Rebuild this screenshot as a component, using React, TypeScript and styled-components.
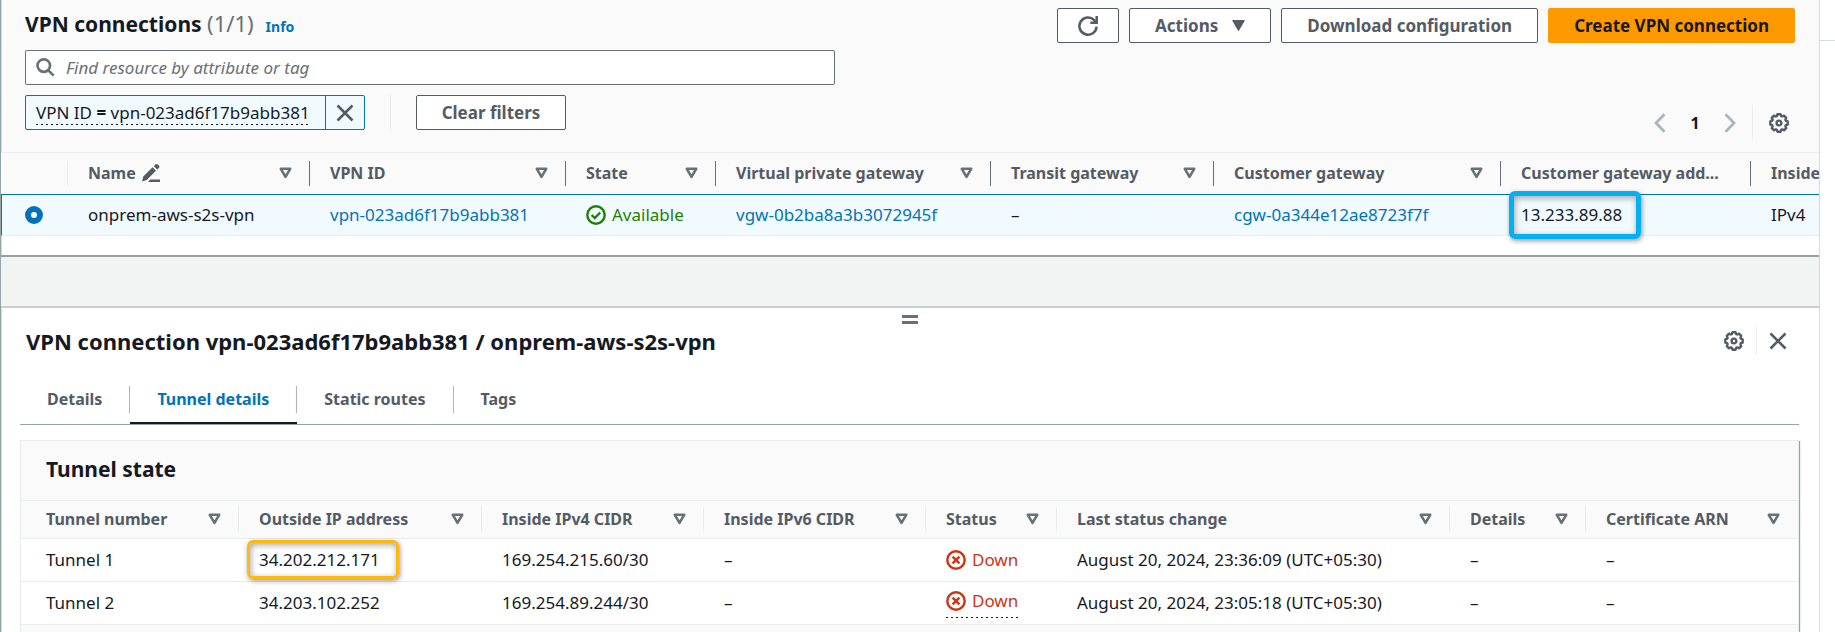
import React from "react";
import styled, { createGlobalStyle, css } from "styled-components";

const color = {
  text: "#16191f",
  muted: "#545b64",
  icon: "#687078",
  link: "#0073bb",
  green: "#1d8102",
  red: "#d13212",
  orange: "#ff9900",
  line: "#eaeded",
  bar: "#fafafa",
  page: "#f2f3f3",
  selected: "#f1faff",
  disabled: "#aab7b8",
};

const GlobalStyle = createGlobalStyle`
  * { box-sizing: border-box; }
  body {
    margin: 0;
    background: #ffffff;
    color: ${color.text};
    font: 400 17px/24px "Noto Sans", "Open Sans", sans-serif;
  }
  button, input { font: inherit; }
  h1, h2, h3 { margin: 0; line-height: 28px; font-weight: 700; }
  h1, h3 { font-size: 21px; }
  h2 { font-size: 22px; }
  a { color: ${color.link}; text-decoration: none; }
`;

const dottedUnderline = css`
  background-image: repeating-linear-gradient(90deg, ${color.text} 0 2px, transparent 2px 5px);
  background-repeat: no-repeat;
  background-position: left bottom;
  background-size: 100% 1px;
`;

const Shell = styled.div`
  display: flex;
  height: 100vh;
  min-height: 632px;
  overflow: hidden;
`;

const Main = styled.main`
  flex: 1;
  min-width: 0;
  display: flex;
  flex-direction: column;
  background: ${color.page};
  border-left: 1px solid #95a5a6;
  overflow: hidden;
`;

const Aside = styled.aside`
  width: 16px;
  flex: none;
  border-left: 1px solid #d5dbdb;
  background: #ffffff;
`;

const AsideHeader = styled.div`
  height: 41px;
  border-bottom: 1px solid #d5dbdb;
`;

const ListPanel = styled.section`
  background: #ffffff;
  padding-bottom: 19px;
  border-bottom: 2px solid #95a0a1;
  box-shadow: inset 1px 0 0 #d5dbdb;
`;

const ListHeader = styled.header`
  background: ${color.bar};
  border-bottom: 1px solid ${color.line};
  box-shadow: inset 1px 0 0 #d5dbdb;
  padding: 8px 24px 12px;
`;

const TitleRow = styled.div`
  display: flex;
  align-items: center;
  justify-content: space-between;
  height: 35px;
`;

const Title = styled.div`
  display: flex;
  align-items: baseline;
  gap: 12px;
  padding-bottom: 4px;
`;

const Count = styled.span`
  font-size: 22px;
  font-weight: 400;
  color: ${color.icon};
`;

const InfoLink = styled.a`
  font-size: 14px;
  font-weight: 700;
`;

const Actions = styled.div`
  display: flex;
  gap: 10px;
`;

const Button = styled.button<{ $primary?: boolean; $icon?: boolean }>`
  display: flex;
  align-items: center;
  gap: 14px;
  height: 35px;
  padding: 0 ${(p) => (p.$icon ? 20 : 25)}px;
  border: 1px solid ${(p) => (p.$primary ? color.orange : color.muted)};
  border-radius: 2px;
  background: ${(p) => (p.$primary ? color.orange : "#ffffff")};
  color: ${(p) => (p.$primary ? color.text : color.muted)};
  font-weight: 700;
  white-space: nowrap;
`;

const SearchBox = styled.label`
  display: flex;
  align-items: center;
  gap: 11px;
  max-width: 810px;
  height: 35px;
  margin-top: 7px;
  padding: 0 10px;
  border: 1px solid ${color.icon};
  border-radius: 2px;
  background: #ffffff;
  color: ${color.icon};
`;

const SearchInput = styled.input`
  flex: 1;
  min-width: 0;
  padding: 0;
  border: 0;
  outline: 0;
  background: none;
  &::placeholder { color: ${color.icon}; font-style: italic; opacity: 1; }
`;

const FilterRow = styled.div`
  display: flex;
  justify-content: space-between;
  align-items: flex-start;
  margin-top: 10px;
`;

const Filters = styled.div`
  display: flex;
  align-items: stretch;
  height: 35px;
`;

const Token = styled.div`
  display: flex;
  border: 1px solid ${color.link};
  border-radius: 2px;
  background: ${color.selected};
`;

const TokenText = styled.span`
  align-self: center;
  margin: 0 15px 0 10px;
  padding: 2px 0 1px;
  line-height: 22px;
  ${dottedUnderline}
`;

const TokenRemove = styled.button`
  display: flex;
  align-items: center;
  justify-content: center;
  width: 39px;
  padding: 0;
  border: 0;
  border-left: 1px solid ${color.link};
  background: none;
  color: ${color.muted};
`;

const Divider = styled.span<{ $gap: number }>`
  width: 1px;
  align-self: stretch;
  margin: 0 ${(p) => p.$gap}px;
  background: ${color.line};
`;

const Pager = styled.nav`
  display: flex;
  align-items: center;
  height: 35px;
  margin-top: 10px;
  padding-right: 6px;
`;

const IconButton = styled.button<{ $faint?: boolean }>`
  display: flex;
  padding: 0;
  border: 0;
  background: none;
  color: ${(p) => (p.$faint ? color.disabled : color.muted)};
`;

const PageNumber = styled.strong`
  width: 58px;
  text-align: center;
  font-size: 16px;
`;

const Table = styled.table`
  width: 100%;
  table-layout: fixed;
  border-collapse: separate;
  border-spacing: 0;
`;

const Col = styled.col<{ $width?: number }>`
  width: ${(p) => (p.$width ? `${p.$width}px` : "auto")};
`;

const HeadCell = styled.th<{ $tall?: boolean }>`
  height: ${(p) => (p.$tall ? 41 : 38)}px;
  padding: 0;
  background: ${color.bar};
  color: ${color.muted};
  font-size: 16px;
  text-align: left;
  border-bottom: ${(p) => (p.$tall ? "0" : `1px solid ${color.line}`)};
`;

const HeadInner = styled.div<{ $first?: number; $sep?: string }>`
  display: flex;
  align-items: center;
  justify-content: space-between;
  height: 25px;
  padding: 0 17px 1px ${(p) => p.$first ?? 20}px;
  border-right: 1px solid ${(p) => p.$sep ?? "transparent"};
  white-space: nowrap;
`;

const HeadLabel = styled.span`
  display: flex;
  align-items: center;
  gap: 6px;
`;

const Cell = styled.td<{ $first?: number; $selected?: boolean }>`
  height: ${(p) => (p.$selected ? 42 : 43)}px;
  padding: 0 0 0 ${(p) => p.$first ?? 20}px;
  white-space: nowrap;
  border-bottom: 1px solid ${color.line};
  ${(p) =>
    p.$selected &&
    css`
      background: ${color.selected};
      border-top: 1px solid ${color.link};
      &:first-child { border-left: 1px solid ${color.link}; }
    `}
`;

const Radio = styled.input`
  display: block;
  appearance: none;
  width: 18px;
  height: 18px;
  margin: 0;
  border: 6px solid ${color.link};
  border-radius: 50%;
  background: #ffffff;
`;

const Status = styled.span<{ $tone: string; $dotted?: boolean }>`
  display: inline-flex;
  align-items: center;
  gap: 6px;
  color: ${(p) => p.$tone};
  line-height: 26px;
  vertical-align: middle;
  ${(p) =>
    p.$dotted &&
    css`
      padding-bottom: 4px;
      ${dottedUnderline}
    `}
`;

const Highlight = styled.span<{ $blue?: boolean }>`
  position: relative;
  display: inline-block;
  &::after {
    content: "";
    position: absolute;
    inset: ${(p) => (p.$blue ? "-12px -19px -12px -12px" : "-8px -19px -7px -12px")};
    border: ${(p) => (p.$blue ? "5px solid #00b0f0" : "3px solid #ffb80f")};
    border-radius: 6px;
    box-shadow: 1px 2px 5px rgba(0, 0, 0, 0.4), inset 1px 2px 6px rgba(0, 0, 0, 0.35);
  }
`;

const SplitPanel = styled.section`
  flex: 1;
  margin-top: 49px;
  padding: 7px 20px 0 19px;
  background: #ffffff;
  border-top: 2px solid #c8cfcf;
  box-shadow: inset 1px 0 0 #d5dbdb;
`;

const Handle = styled.button`
  display: flex;
  flex-direction: column;
  gap: 3px;
  width: 16px;
  margin: 0 auto;
  padding: 0;
  border: 0;
  background: none;
  &::before, &::after {
    content: "";
    height: 3px;
    background: ${color.icon};
  }
`;

const PanelTitleRow = styled.div`
  display: flex;
  align-items: center;
  justify-content: space-between;
  height: 29px;
  margin-top: 2px;
  padding: 0 12px 0 6px;
`;

const PanelTools = styled.div`
  display: flex;
  align-items: center;
  height: 29px;
`;

const Tabs = styled.div`
  display: flex;
  height: 44px;
  margin-top: 26px;
  border-bottom: 1px solid #95a5a6;
`;

const Tab = styled.button<{ $active?: boolean }>`
  display: flex;
  height: 43px;
  padding: 0;
  border: 0;
  border-bottom: 2px solid ${(p) => (p.$active ? color.text : "transparent")};
  background: none;
  color: ${(p) => (p.$active ? color.link : color.muted)};
  font-size: 16px;
  font-weight: 700;
`;

const TabLabel = styled.span<{ $last?: boolean }>`
  height: 27px;
  margin-top: 5px;
  padding: 0 27px;
  line-height: 26px;
  border-right: 1px solid ${(p) => (p.$last ? "transparent" : color.disabled)};
`;

const Card = styled.section`
  margin-top: 15px;
  border: 1px solid ${color.line};
  border-bottom: 0;
  background: ${color.bar};
  box-shadow: 1px 1px 1px 0 rgba(0, 28, 36, 0.4);
  padding-bottom: 20px;
`;

const CardHeader = styled.header`
  padding: 14px 25px 17px;
  border-bottom: 1px solid ${color.line};
`;

const Row = styled.tr`
  background: #ffffff;
`;

const SortIcon = () => (
  <svg width="13" height="12" viewBox="0 0 13 12" fill="none" stroke={color.icon} strokeWidth="2.6" strokeLinejoin="round" aria-hidden="true">
    <path d="M1.8 1.8h9.4L6.5 9.8z" />
  </svg>
);

const CloseIcon = () => (
  <svg width="18" height="18" viewBox="0 0 18 18" fill="none" stroke="currentColor" strokeWidth="2.6" aria-hidden="true">
    <path d="M1.5 1.5l15 15M16.5 1.5l-15 15" />
  </svg>
);

const SearchIcon = () => (
  <svg width="19" height="19" viewBox="0 0 20 20" fill="none" stroke="currentColor" strokeWidth="2.8" aria-hidden="true">
    <circle cx="8.2" cy="8" r="6.6" />
    <path d="M13 13l5.6 5.6" />
  </svg>
);

const RefreshIcon = () => (
  <svg width="20" height="20" viewBox="0 0 20 20" fill="none" stroke="currentColor" strokeWidth="2.5" aria-hidden="true">
    <path d="M18.6 10.6a8.6 8.6 0 1 1-2.3-6.4l1.6 2.2" />
    <path d="M18.7 0v6.8h-6.4" />
  </svg>
);

const CaretIcon = () => (
  <svg width="13" height="11" viewBox="0 0 13 11" fill="currentColor" aria-hidden="true">
    <path d="M1 0h11q1.2 0 .6 1L7.2 10.3q-.7 1-1.4 0L.4 1Q-.2 0 1 0z" />
  </svg>
);

const ChevronIcon = ({ right }: { right?: boolean }) => (
  <svg width="12" height="20" viewBox="0 0 12 20" fill="none" stroke="currentColor" strokeWidth="2.8" aria-hidden="true">
    <path d={right ? "M1.5 1.2L10 10l-8.5 8.8" : "M10.5 1.2L2 10l8.5 8.8"} />
  </svg>
);

const GearIcon = () => (
  <svg width="20" height="20" viewBox="0 0 20 20" fill="none" stroke="currentColor" strokeWidth="2.4" strokeLinejoin="round" aria-hidden="true">
    <path d="M8.4 1.3h3.2l.6 1.8 1 .4 1.8-.8 2.2 2.2-.8 1.8.4 1 1.9.7v3.2l-1.9.6-.4 1 .8 1.9-2.2 2.2-1.8-.9-1 .5-.6 1.8H8.4l-.6-1.8-1-.5-1.8.9-2.2-2.2.8-1.9-.4-1-1.9-.6V8.4l1.9-.7.4-1-.8-1.8L5 2.7l1.8.8 1-.4z" />
    <circle cx="10" cy="10" r="2.4" />
  </svg>
);

const PencilIcon = () => (
  <svg width="18" height="18" viewBox="0 0 18 18" fill="currentColor" aria-hidden="true">
    <path d="M0 17.6l1.3-5L10.6 3.3l3.4 3.4-9.3 9.4zM11.8 2.2l1.6-1.6q1.3-1.1 2.5 0l1 1q1 1.2 0 2.4l-1.6 1.5zM8.4 15.4H18V18H6z" />
  </svg>
);

const CheckCircle = () => (
  <svg width="20" height="20" viewBox="0 0 20 20" fill="none" stroke="currentColor" strokeWidth="2.4" aria-hidden="true">
    <circle cx="10" cy="10" r="8.7" />
    <path d="M5.6 10l3.2 3.1 5.4-5.6" />
  </svg>
);

const CrossCircle = () => (
  <svg width="20" height="20" viewBox="0 0 20 20" fill="none" stroke="currentColor" strokeWidth="2.4" aria-hidden="true">
    <circle cx="10" cy="10" r="8.7" />
    <path d="M6.6 6.6l6.8 6.8M13.4 6.6l-6.8 6.8" />
  </svg>
);

const vpnColumns = [
  { label: "Name", width: 242, editable: true, sort: true },
  { label: "VPN ID", width: 256, sort: true },
  { label: "State", width: 150, sort: true },
  { label: "Virtual private gateway", width: 275, sort: true },
  { label: "Transit gateway", width: 223, sort: true },
  { label: "Customer gateway", width: 287, sort: true },
  { label: "Customer gateway add...", width: 250 },
];

const tunnelColumns = [
  { label: "Tunnel number", width: 218 },
  { label: "Outside IP address", width: 243 },
  { label: "Inside IPv4 CIDR", width: 222 },
  { label: "Inside IPv6 CIDR", width: 222 },
  { label: "Status", width: 131 },
  { label: "Last status change", width: 393 },
  { label: "Details", width: 136 },
  { label: "Certificate ARN" },
];

const tunnels = [
  { name: "Tunnel 1", ip: "34.202.212.171", cidr: "169.254.215.60/30", changed: "August 20, 2024, 23:36:09 (UTC+05:30)", marked: true },
  { name: "Tunnel 2", ip: "34.203.102.252", cidr: "169.254.89.244/30", changed: "August 20, 2024, 23:05:18 (UTC+05:30)", marked: false },
];

const tabs = ["Details", "Tunnel details", "Static routes", "Tags"];

export default function App() {
  return (
    <Shell>
      <GlobalStyle />
      <Main>
        <ListPanel>
          <ListHeader>
            <TitleRow>
              <Title>
                <h1>
                  VPN connections <Count>(1/1)</Count>
                </h1>
                <InfoLink href="#info">Info</InfoLink>
              </Title>
              <Actions>
                <Button $icon aria-label="Refresh"><RefreshIcon /></Button>
                <Button>Actions <CaretIcon /></Button>
                <Button>Download configuration</Button>
                <Button $primary>Create VPN connection</Button>
              </Actions>
            </TitleRow>
            <SearchBox>
              <SearchIcon />
              <SearchInput type="text" aria-label="Find resource" placeholder="Find resource by attribute or tag" />
            </SearchBox>
            <FilterRow>
              <Filters>
                <Token>
                  <TokenText>VPN ID <b>=</b> vpn-023ad6f17b9abb381</TokenText>
                  <TokenRemove aria-label="Remove filter"><CloseIcon /></TokenRemove>
                </Token>
                <Divider $gap={25} />
                <Button>Clear filters</Button>
              </Filters>
              <Pager aria-label="Pagination">
                <IconButton $faint aria-label="Previous page"><ChevronIcon /></IconButton>
                <PageNumber>1</PageNumber>
                <IconButton $faint aria-label="Next page"><ChevronIcon right /></IconButton>
                <Divider $gap={16} />
                <IconButton aria-label="Preferences"><GearIcon /></IconButton>
              </Pager>
            </FilterRow>
          </ListHeader>
          <Table>
            <colgroup>
              <Col $width={67} />
              {vpnColumns.map((c) => <Col key={c.label} $width={c.width} />)}
              <Col />
            </colgroup>
            <thead>
              <tr>
                <HeadCell $tall><HeadInner $sep={color.line} /></HeadCell>
                {vpnColumns.map((c) => (
                  <HeadCell $tall key={c.label} scope="col">
                    <HeadInner $sep={color.icon}>
                      <HeadLabel>
                        {c.label}
                        {c.editable && <PencilIcon />}
                      </HeadLabel>
                      {c.sort && <SortIcon />}
                    </HeadInner>
                  </HeadCell>
                ))}
                <HeadCell $tall scope="col"><HeadInner>Inside</HeadInner></HeadCell>
              </tr>
            </thead>
            <tbody>
              <tr>
                <Cell $selected $first={23}><Radio type="radio" name="vpn" aria-label="onprem-aws-s2s-vpn" defaultChecked /></Cell>
                <Cell $selected>onprem-aws-s2s-vpn</Cell>
                <Cell $selected><a href="#vpn">vpn-023ad6f17b9abb381</a></Cell>
                <Cell $selected><Status $tone={color.green}><CheckCircle />Available</Status></Cell>
                <Cell $selected><a href="#vgw">vgw-0b2ba8a3b3072945f</a></Cell>
                <Cell $selected>–</Cell>
                <Cell $selected><a href="#cgw">cgw-0a344e12ae8723f7f</a></Cell>
                <Cell $selected><Highlight $blue>13.233.89.88</Highlight></Cell>
                <Cell $selected>IPv4</Cell>
              </tr>
            </tbody>
          </Table>
        </ListPanel>

        <SplitPanel>
          <Handle aria-label="Resize panel" />
          <PanelTitleRow>
            <h2>VPN connection vpn-023ad6f17b9abb381 / onprem-aws-s2s-vpn</h2>
            <PanelTools>
              <IconButton aria-label="Panel preferences"><GearIcon /></IconButton>
              <Divider $gap={12} />
              <IconButton aria-label="Close panel"><CloseIcon /></IconButton>
            </PanelTools>
          </PanelTitleRow>
          <Tabs role="tablist">
            {tabs.map((t, i) => (
              <Tab key={t} role="tab" aria-selected={i === 1} $active={i === 1}>
                <TabLabel $last={i === tabs.length - 1}>{t}</TabLabel>
              </Tab>
            ))}
          </Tabs>
          <Card>
            <CardHeader><h3>Tunnel state</h3></CardHeader>
            <Table>
              <colgroup>
                {tunnelColumns.map((c) => <Col key={c.label} $width={c.width} />)}
              </colgroup>
              <thead>
                <tr>
                  {tunnelColumns.map((c, i) => (
                    <HeadCell key={c.label} scope="col">
                      <HeadInner $first={i === 0 ? 25 : 20} $sep={c.width ? color.line : undefined}>
                        {c.label}
                        <SortIcon />
                      </HeadInner>
                    </HeadCell>
                  ))}
                </tr>
              </thead>
              <tbody>
                {tunnels.map((t) => (
                  <Row key={t.name}>
                    <Cell $first={25}>{t.name}</Cell>
                    <Cell>{t.marked ? <Highlight>{t.ip}</Highlight> : t.ip}</Cell>
                    <Cell>{t.cidr}</Cell>
                    <Cell>–</Cell>
                    <Cell><Status $tone={color.red} $dotted={!t.marked}><CrossCircle />Down</Status></Cell>
                    <Cell>{t.changed}</Cell>
                    <Cell>–</Cell>
                    <Cell>–</Cell>
                  </Row>
                ))}
              </tbody>
            </Table>
          </Card>
        </SplitPanel>
      </Main>
      <Aside><AsideHeader /></Aside>
    </Shell>
  );
}
